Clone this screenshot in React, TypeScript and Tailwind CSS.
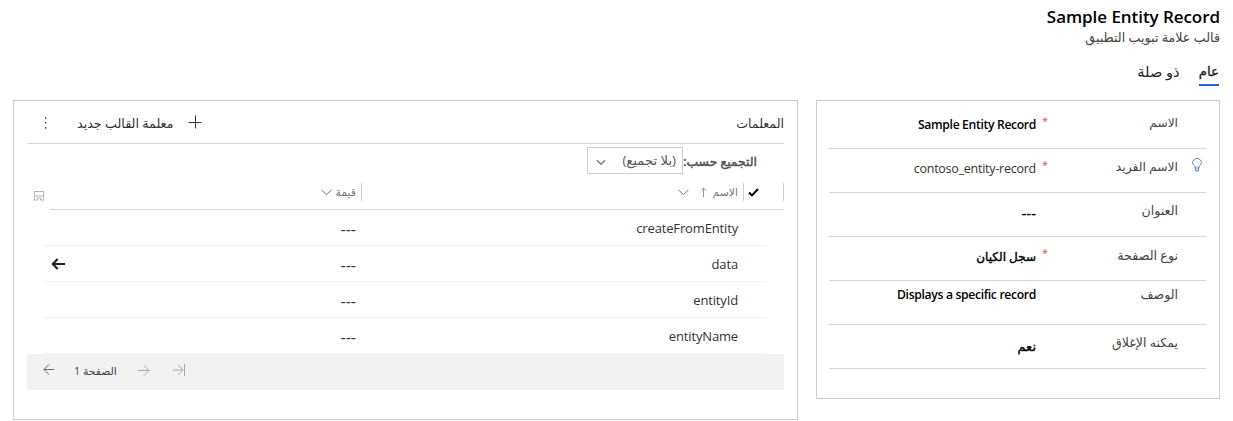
import type { ReactNode } from "react";

type Field = {
  label: string;
  labelClass: string;
  value: string;
  valueClass: string;
  required?: boolean;
  hint?: boolean;
};

const fields: Field[] = [
  { label: "الاسم", labelClass: "pt-[9px] text-[12.2px]", value: "Sample Entity Record", valueClass: "pt-[10px] text-[12.2px] font-semibold tracking-[-0.35px] text-black", required: true },
  { label: "الاسم الفريد", labelClass: "pt-[9px] text-[12.3px]", value: "contoso_entity-record", valueClass: "pt-[10px] text-[12.5px] font-medium tracking-[-0.25px] text-[#333]", required: true, hint: true },
  { label: "العنوان", labelClass: "pt-[9px] text-[12.6px]", value: "---", valueClass: "pt-[9px] text-[15px] font-semibold text-black" },
  { label: "نوع الصفحة", labelClass: "pt-[9px] text-[12.7px]", value: "سجل الكيان", valueClass: "pt-[10px] text-[12px] [-webkit-text-stroke:0.4px_black] text-black", required: true },
  { label: "الوصف", labelClass: "pt-[5px] text-[12.6px]", value: "Displays a specific record", valueClass: "pt-[4px] text-[12.2px] font-semibold tracking-[-0.34px] text-black" },
  { label: "يمكنه الإغلاق", labelClass: "pt-[9px] text-[12.6px]", value: "نعم", valueClass: "pt-[11px] text-[13px] [-webkit-text-stroke:0.4px_black] text-black" },
];

const parameters = ["createFromEntity", "data", "entityId", "entityName"];

function Icon({ w, h, className, stroke = 1, children }: { w: number; h: number; className?: string; stroke?: number; children: ReactNode }) {
  return (
    <svg width={w} height={h} viewBox={`0 0 ${w} ${h}`} fill="none" stroke="currentColor" strokeWidth={stroke} className={`shrink-0 ${className ?? ""}`}>
      {children}
    </svg>
  );
}

function Chevron({ className }: { className?: string }) {
  return (
    <Icon w={11} h={7} className={className}>
      <path d="M.5 .8 5.5 5.8 10.5 .8" />
    </Icon>
  );
}

function FieldRow({ field }: { field: Field }) {
  return (
    <div className="flex h-[44px] border-b border-[#d8d8d8]">
      <div className="w-[28px] pr-[4px] pt-[9px]">
        {field.hint && (
          <Icon w={10} h={14} className="text-[#5b88bd]">
            <path d="M3 10V8.5C2.6 7.5.6 6.7.6 4.6a4.4 4.1 0 0 1 8.8 0C9.4 6.7 7.4 7.5 7 8.5V10Z" />
            <path d="M3.5 10v3h3v-3" />
          </Icon>
        )}
      </div>
      <div className={`w-[130px] leading-[18px] text-[#444] ${field.labelClass}`}>{field.label}</div>
      <div className="flex w-[12px] pt-[8px] text-[10.5px] leading-[16px] text-[#e8403a]">{field.required && "*"}</div>
      <div className={`flex-1 leading-[20px] ${field.valueClass}`}>
        <bdi>{field.value}</bdi>
      </div>
    </div>
  );
}

function GeneralPanel() {
  return (
    <section className="h-[299px] w-[404px] border border-[#ccc] px-[12px] pr-[13px] pt-[4px]">
      {fields.map((field) => (
        <FieldRow key={field.label} field={field} />
      ))}
    </section>
  );
}

function ParametersPanel() {
  return (
    <section className="h-[320px] w-[785px] border border-[#ccc] px-[13px]">
      <header className="flex h-[43px] items-center border-b border-[#d8d8d8] pt-[3px] text-[#333]">
        <h2 className="pt-[2px] text-[12.6px] font-normal">المعلمات</h2>
        <div className="mr-auto flex items-center pl-[17px]">
          <Icon w={14} h={14} className="mb-[2px]">
            <path d="M7.5 .5v13M.5 7.5h13" />
          </Icon>
          <span className="mr-[14px] text-[12.7px]">معلمة القالب جديد</span>
          <Icon w={3} h={12} className="mr-[30px] text-[#555]" stroke={0}>
            <path fill="currentColor" d="M1 0h1.3v1.8H1zM1 5h1.3v1.8H1zM1 10h1.3v1.8H1z" />
          </Icon>
        </div>
      </header>

      <div className="flex h-[33px] pr-[27px] pt-[3px] text-[#555]">
        <span className="w-[74px] whitespace-nowrap pt-[5px] text-[12.4px] leading-[20px] [-webkit-text-stroke:0.5px_#555]">التجميع حسب:</span>
        <div className="flex h-[27px] w-[96px] items-center justify-between border border-[#ccc] pl-[8px] pr-[6px]">
          <span className="pt-px text-[13.2px]">(بلا تجميع)</span>
          <Icon w={10} h={7} stroke={1.4} className="mt-[3px] text-[#777]">
            <path d="M1 1.2 5 5.2 9 1.2" />
          </Icon>
        </div>
      </div>

      <div className="flex h-[33px]">
        <div className="flex flex-1 border-b border-[#d8d8d8] pt-[6px] text-[#777]">
          <div className="flex h-[18px] w-[41px] items-center justify-end border-r border-[#ccc] text-black">
            <div className="flex h-[18px] w-[20px] items-center justify-end border-l border-[#ccc] pl-[4px]">
              <Icon w={11} h={9} stroke={1.9}>
                <path d="M1 4.5 4 7.5 10 1" />
              </Icon>
            </div>
          </div>
          <div className="flex h-[18px] w-[382px] items-center border-l border-[#ccc] pr-[5px]">
            <span className="text-[10.8px]">الاسم</span>
            <Icon w={7} h={10} className="mr-[6px] text-[#b98f6c]">
              <path d="M3.5 10V1M.7 3.8 3.5 1 6.3 3.8" />
            </Icon>
            <Chevron className="mr-[11px]" />
          </div>
          <div className="flex h-[18px] items-center pr-[5px]">
            <span className="text-[10.8px]">قيمة</span>
            <Chevron className="mr-[4px]" />
          </div>
        </div>
        <div className="flex w-[23px] pl-[6px] pr-[6px] pt-[14px]">
          <Icon w={10} h={10} className="text-[#b5b5b5]">
            <path d="M.5 0v9.5M9.5 0v9.5M0 .5h10M0 5h10" />
            <path d="M0 9h3.5V7h3v2H10" />
          </Icon>
        </div>
      </div>

      <div className="pl-[16px] pr-[18px]">
        {parameters.map((name, index) => (
          <div key={name} className="flex h-[36px] items-center border-b border-[#f2f2f2] pr-[28px] pt-[2px] text-[#333]">
            <span className="w-[382px] text-[13px] tracking-[-0.15px]">{name}</span>
            <span className="text-[16px] leading-[20px]">---</span>
            {index === 1 && (
              <Icon w={14} h={12} stroke={2.1} className="mb-[2px] ml-[8px] mr-auto text-[#222]">
                <path d="M14 6H2M6.6 1 1.8 6l4.8 5" />
              </Icon>
            )}
          </div>
        ))}
      </div>

      <footer className="flex h-[36px] items-center justify-end bg-[#f2f2f2] pl-[16px] text-[#aaa]">
        <Icon w={12} h={12} className="mb-[5px]">
          <path d="M0 6h10M5 1l5 5-5 5M11.5 0v12" />
        </Icon>
        <Icon w={12} h={11} className="mb-[4px] mr-[23px]">
          <path d="M0 5.5h11M6 .5l5 5-5 5" />
        </Icon>
        <span className="mr-[21px] whitespace-nowrap pb-[2px] text-[10.8px] font-medium text-[#444]">الصفحة 1</span>
        <Icon w={11} h={11} className="mb-[5px] mr-[20px] text-[#666]">
          <path d="M11 5.5H1M6 .5l-5 5 5 5" />
        </Icon>
      </footer>
    </section>
  );
}

export default function App() {
  return (
    <main dir="rtl" className="h-[421px] w-[1233px] overflow-hidden bg-white pr-[13px] font-['Open_Sans','DejaVu_Sans',sans-serif]">
      <header className="h-[100px] pt-[5px]">
        <h1 className="text-[17px] font-semibold leading-[24px] tracking-[-0.06px] text-black">
          <bdi>Sample Entity Record</bdi>
        </h1>
        <p className="text-[12.7px] leading-[16px] text-[#444]">قالب علامة تبويب التطبيق</p>
        <nav className="flex gap-[19px] pr-px pt-[16px] text-[14.6px] leading-[20px] text-[#222]">
          <span className="flex h-[25px] border-b-2 border-[#2266e3] text-[13.4px] [-webkit-text-stroke:0.3px_#222]">عام</span>
          <span>ذو صلة</span>
        </nav>
      </header>
      <div className="flex gap-[18px]">
        <GeneralPanel />
        <ParametersPanel />
      </div>
    </main>
  );
}
